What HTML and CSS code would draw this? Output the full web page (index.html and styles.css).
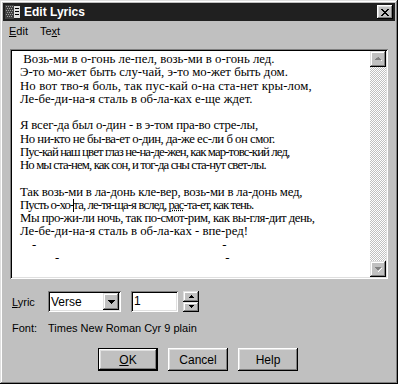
FILE: index.html
```html
<!DOCTYPE html>
<html lang="ru">
<head>
    <meta charset="UTF-8">
    <title>Edit Lyrics</title>
    <link rel="stylesheet" href="styles.css">
</head>
<body>
<div class="window">
    <div class="titlebar">
        <svg class="app-icon" width="16" height="16" viewBox="0 0 16 16">
            <rect x="0" y="1" width="9" height="14" fill="#404040"/>
            <path d="M1 2h1v1h-1zM3 2h1v1h-1zM5 2h1v1h-1zM7 2h1v1h-1zM2 4h1v1h-1zM4 4h1v1h-1zM6 4h1v1h-1zM1 6h1v1h-1zM3 6h1v1h-1zM5 6h1v1h-1zM7 6h1v1h-1zM2 8h1v1h-1zM4 8h1v1h-1zM6 8h1v1h-1zM1 10h1v1h-1zM3 10h1v1h-1zM5 10h1v1h-1zM7 10h1v1h-1zM2 12h1v1h-1zM4 12h1v1h-1zM6 12h1v1h-1z" fill="#a0a0a0"/>
            <rect x="9" y="2" width="6" height="12" fill="#e0e0e0"/>
            <path d="M10 4h4v1h-4zM10 7h4v1h-4zM10 10h4v1h-4z" fill="#000"/>
        </svg>
        <span class="title">Edit Lyrics</span>
        <div class="close">
            <svg width="8" height="7" viewBox="0 0 8 7">
                <path d="M0 0h2v1h1v1h2v-1h1v-1h2v1h-1v1h-1v1h-1v1h1v1h1v1h1v1h-2v-1h-1v-1h-2v1h-1v1h-2v-1h1v-1h1v-1h1v-1h-1v-1h-1v-1h-1z" fill="#000"/>
            </svg>
        </div>
    </div>
    <div class="menubar">
        <span class="menu-item"><u>E</u>dit</span>
        <span class="menu-item">Te<u>x</u>t</span>
    </div>
    <div class="content">
        <div class="editor">
            <div class="lyrics">
                <p> Возь-ми в о-гонь ле-пел, возь-ми в о-гонь лед.</p>
                <p>Э-то мо-жет быть слу-чай, э-то мо-жет быть дом.</p>
                <p class="wide">Но вот тво-я боль, так пус-кай о-на ста-нет кры-лом,</p>
                <p>Ле-бе-ди-на-я сталь в об-ла-ках е-ще ждет.</p>
                <p></p>
                <p class="snug">Я всег-да был о-дин - в э-том пра-во стре-лы,</p>
                <p class="tight">Но ни-кто не бы-ва-ет о-дин, да-же ес-ли б он смог.</p>
                <p class="tighter">Пус-кай наш цвет глаз не-на-де-жен, как мар-товс-кий лед,</p>
                <p class="tighter">Но мы ста-нем, как сон, и тог-да сны ста-нут свет-лы.</p>
                <p></p>
                <p class="snug">Так возь-ми в ла-донь кле-вер, возь-ми в ла-донь мед,</p>
                <p class="tighter">Пусть о-хо-<span class="caret"></span>та, ле-тя-ща-я вслед, <span class="marked">рас</span>-та-ет, как тень.</p>
                <p class="tight">Мы про-жи-ли ночь, так по-смот-рим, как вы-гля-дит день,</p>
                <p>Ле-бе-ди-на-я сталь в об-ла-ках - впе-ред!</p>
                <p class="dashes"><span class="dash a1">-</span><span class="dash a2">-</span></p>
                <p class="dashes"><span class="dash b1">-</span><span class="dash b2">-</span></p>
            </div>
            <div class="scrollbar">
                <div class="arrow">
                    <svg width="7" height="5" viewBox="0 0 7 5">
                        <path d="M4 1h1v1h1v1h1v1h-1v-1h-1v-1h-1z" fill="#fff"/>
                        <path d="M3 0h1v1h1v1h1v1h-6v-1h1v-1h1z" fill="#808080"/>
                    </svg>
                </div>
                <div class="track"></div>
                <div class="arrow">
                    <svg width="7" height="5" viewBox="0 0 7 5">
                        <path d="M1 1h6v1h-1v1h-1v1h-1v1h-1v-1h1v-1h1v-1h1v-1h-5z" fill="#fff"/>
                        <path d="M0 0h6v1h-1v1h-1v1h-2v-1h-1v-1h-1z" fill="#808080"/>
                    </svg>
                </div>
            </div>
        </div>

        <div class="row lyric-row">
            <span class="label"><u>L</u>yric</span>
            <div class="combo">
                <span class="combo-text">Verse</span>
                <div class="combo-btn">
                    <svg width="7" height="4" viewBox="0 0 7 4">
                        <path d="M0 0h7v1h-1v1h-1v1h-1v1h-1v-1h-1v-1h-1v-1h-1z" fill="#000"/>
                    </svg>
                </div>
            </div>
            <div class="spin-field">1</div>
            <div class="spin">
                <div class="spin-btn">
                    <svg width="5" height="3" viewBox="0 0 5 3"><path d="M2 0h1v1h1v1h1v1h-5v-1h1v-1h1z" fill="#000"/></svg>
                </div>
                <div class="spin-btn">
                    <svg width="5" height="3" viewBox="0 0 5 3"><path d="M0 0h5v1h-1v1h-1v1h-1v-1h-1v-1h-1z" fill="#000"/></svg>
                </div>
            </div>
        </div>

        <div class="row font-row">
            <span class="label">Font:</span>
            <span>Times New Roman Cyr 9 plain</span>
        </div>

        <div class="buttons">
            <div class="btn default"><span><u>O</u>K</span></div>
            <div class="btn"><span>Cancel</span></div>
            <div class="btn"><span>Help</span></div>
        </div>
    </div>
</div>
</body>
</html>
```

FILE: styles.css
```css
* {
    margin: 0;
    padding: 0;
    box-sizing: border-box;
}

body {
    background: #c0c0c0;
    font-family: "Liberation Sans", Arial, sans-serif;
    font-size: 11px;
    color: #000;
}

/* окно в стиле win95 */
.window {
    width: 398px;
    height: 384px;
    padding: 3px;
    background: #c0c0c0;
    box-shadow: inset -1px -1px #000, inset 1px 1px #dfdfdf,
                inset -2px -2px #808080, inset 2px 2px #fff;
}

.titlebar {
    display: flex;
    align-items: center;
    height: 18px;
    padding: 0 2px 0 2px;
    background: #202020;
    color: #fff;
}

.app-icon {
    flex: none;
    margin-right: 3px;
}

.title {
    flex: 1;
    font-weight: bold;
    font-size: 12px;
}

.close {
    display: flex;
    align-items: center;
    justify-content: center;
    width: 16px;
    height: 14px;
    background: #c0c0c0;
    box-shadow: inset -1px -1px #000, inset 1px 1px #fff,
                inset -2px -2px #808080, inset 2px 2px #dfdfdf;
}

.menubar {
    display: flex;
    height: 18px;
    align-items: center;
    padding-top: 2px;
}

.menu-item {
    padding: 0 6px;
}

.content {
    padding: 10px 7px 0 7px;
}

/* поле с текстом */
.editor {
    display: flex;
    height: 230px;
    padding: 2px;
    background: #fff;
    box-shadow: inset 1px 1px #808080, inset -1px -1px #fff,
                inset 2px 2px #000, inset -2px -2px #dfdfdf;
}

.lyrics {
    flex: 1;
    padding: 2px 8px;
    font-family: "Liberation Serif", "Times New Roman", serif;
    font-size: 12.8px;
    line-height: 13.27px;
    overflow: hidden;
}

.lyrics p {
    height: 13.27px;
    white-space: pre;
}

/* растровый шрифт в оригинале уже, подгоняем строки */
.lyrics .wide { letter-spacing: 0.1px; }
.lyrics .snug { letter-spacing: -0.2px; }
.lyrics .tight { letter-spacing: -0.5px; }
.lyrics .tighter { letter-spacing: -0.9px; }

.caret {
    display: inline-block;
    width: 1px;
    height: 13px;
    margin-right: -1px;
    background: #000;
    vertical-align: -3px;
}

.marked {
    text-decoration: underline dotted;
}

.dash {
    display: inline-block;
}

.a1 { margin-left: 12px; }
.a2 { margin-left: 186px; }
.b1 { margin-left: 35px; }
.b2 { margin-left: 166px; }

.scrollbar {
    display: flex;
    flex-direction: column;
    width: 16px;
}

.arrow {
    display: flex;
    align-items: center;
    justify-content: center;
    height: 16px;
    background: #c0c0c0;
    box-shadow: inset -1px -1px #000, inset 1px 1px #dfdfdf,
                inset -2px -2px #808080, inset 2px 2px #fff;
}

.track {
    flex: 1;
    background: repeating-conic-gradient(#fff 0 25%, #c0c0c0 0 50%) 0 0/2px 2px;
}

.row {
    display: flex;
    align-items: center;
    padding-left: 2px;
}

.label {
    width: 36px;
}

.lyric-row {
    margin-top: 12px;
    height: 21px;
}

.combo {
    display: flex;
    align-items: center;
    width: 73px;
    height: 21px;
    padding: 2px;
    background: #fff;
    box-shadow: inset 1px 1px #808080, inset -1px -1px #fff,
                inset 2px 2px #000, inset -2px -2px #dfdfdf;
}

.combo-text {
    flex: 1;
    padding-left: 1px;
    font-size: 12px;
}

.combo-btn {
    display: flex;
    align-items: center;
    justify-content: center;
    width: 16px;
    height: 17px;
    background: #c0c0c0;
    box-shadow: inset -1px -1px #000, inset 1px 1px #dfdfdf,
                inset -2px -2px #808080, inset 2px 2px #fff;
}

.spin-field {
    width: 47px;
    height: 21px;
    margin-left: 10px;
    padding: 2px 3px;
    font-size: 12px;
    line-height: 17px;
    background: #fff;
    box-shadow: inset 1px 1px #808080, inset -1px -1px #fff,
                inset 2px 2px #000, inset -2px -2px #dfdfdf;
}

.spin {
    display: flex;
    flex-direction: column;
    margin-left: 5px;
    width: 16px;
    height: 21px;
}

.spin-btn {
    display: flex;
    align-items: center;
    justify-content: center;
    flex: 1;
    background: #c0c0c0;
    box-shadow: inset -1px -1px #000, inset 1px 1px #dfdfdf,
                inset -2px -2px #808080, inset 2px 2px #fff;
}

.font-row {
    margin-top: 8px;
    height: 16px;
}

.buttons {
    display: flex;
    justify-content: center;
    gap: 10px;
    margin-top: 12px;
    padding-right: 2px;
}

.btn {
    display: flex;
    align-items: center;
    justify-content: center;
    width: 60px;
    height: 23px;
    font-size: 12px;
    background: #c0c0c0;
    box-shadow: inset -1px -1px #000, inset 1px 1px #fff,
                inset -2px -2px #808080, inset 2px 2px #dfdfdf;
}

.btn.default {
    border: 1px solid #000;
    box-shadow: inset -1px -1px #000, inset 1px 1px #fff,
                inset -2px -2px #808080, inset 2px 2px #dfdfdf;
}
```
